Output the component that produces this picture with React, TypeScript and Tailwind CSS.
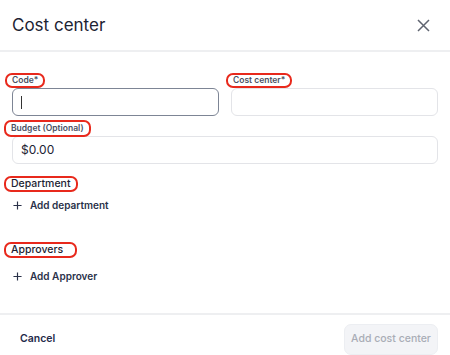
import React from 'react'

function Mark({ children, className = '' }: { children: React.ReactNode; className?: string }) {
    return (
        <span
            className={
                'inline-flex items-center leading-none rounded-[7px] border-2 border-[#e8291c] -ml-[7px] pl-[5px] pr-[5px] ' +
                className
            }
        >
            {children}
        </span>
    )
}

function Plus() {
    return (
        <svg width="9" height="9" viewBox="0 0 10 10" className="text-[#2a3149]">
            <path d="M5 0.5v9M0.5 5h9" stroke="currentColor" strokeWidth="1.3" />
        </svg>
    )
}

function App() {
    return (
        <div className="w-[450px] h-[355px] bg-white overflow-hidden font-['Inter',sans-serif] leading-none text-[#1d2333]">
            <div className="flex h-[52px] items-center justify-between border-b-2 border-[#eeeff1] pl-3 pr-[20px]">
                <span className="text-[17px] leading-none">Cost center</span>
                <svg width="13" height="13" viewBox="0 0 13 13" className="text-[#5f6470]">
                    <path d="M1 1l11 11M12 1L1 12" stroke="currentColor" strokeWidth="1.5" />
                </svg>
            </div>

            <div className="px-3 pt-[21px]">
                <div className="grid grid-cols-2 gap-3">
                    <div className="flex flex-col">
                        <Mark className="h-[15px] self-start pr-[4px] text-[8.5px] font-semibold text-[#4a5062]">Code*</Mark>
                        <div className="flex h-[28px] items-center rounded-[6px] border border-[#7d8595] px-2">
                            <span className="h-[13px] w-px bg-[#333]" />
                        </div>
                    </div>
                    <div className="flex flex-col">
                        <Mark className="ml-[-5px] h-[15px] self-start text-[8.5px] font-semibold text-[#4a5062]">Cost center*</Mark>
                        <div className="h-[28px] rounded-[6px] border border-[#e3e4e8]" />
                    </div>
                </div>

                <div className="mt-[4px] flex flex-col">
                    <Mark className="z-10 ml-[-8px] h-[17px] self-start text-[8.5px] font-semibold text-[#4a5062]">Budget (Optional)</Mark>
                    <div className="-mt-[1px] flex h-[28px] items-center rounded-[6px] border border-[#e3e4e8] px-2 text-[12px] text-[#1d2333]">
                        $0.00
                    </div>
                </div>

                <div className="mt-[12px] flex">
                    <Mark className="ml-[-8px] h-[16px] pr-[4px] text-[10.5px] font-medium text-[#1d2333]">Department</Mark>
                </div>
                <div className="mt-[6px] flex h-[14px] items-center gap-[8px] pl-[1px] text-[10px] font-semibold text-[#2a3149]">
                    <Plus />
                    Add department
                </div>

                <div className="mt-[30px] flex">
                    <Mark className="ml-[-8px] h-[16px] pr-[12px] text-[10.5px] font-medium text-[#1d2333]">Approvers</Mark>
                </div>
                <div className="mt-[11px] flex h-[14px] items-center gap-[8px] pl-[1px] text-[10px] font-semibold text-[#2a3149]">
                    <Plus />
                    Add Approver
                </div>
            </div>

            <div className="mt-[30px] flex items-center justify-between border-t-2 border-[#eeeff1] pt-[9px] pl-[20px] pr-3">
                <span className="text-[10.5px] font-semibold text-[#1f2a4a]">Cancel</span>
                <div className="flex h-[31px] w-[94px] items-center justify-center rounded-[7px] border border-[#eceef2] bg-[#f3f4f7] text-[10.5px] font-medium text-[#a9adb6]">
                    Add cost center
                </div>
            </div>
        </div>
    )
}

export default App
